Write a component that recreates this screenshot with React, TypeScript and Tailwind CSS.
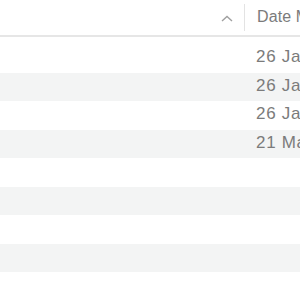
export default function App() {
  const rows = ["26 Jan 2023", "26 Jan 2023", "26 Jan 2023", "21 Mar 2023", "", "", "", "", ""];
  return (
    <div className="w-[300px] h-[300px] overflow-hidden bg-white font-['Liberation_Sans',Arial,sans-serif] text-[#7b7b7b]">
      <div className="h-[37px] flex items-center border-b-2 border-[#e6e6e6]">
        <div className="w-[244px] shrink-0 flex justify-end pr-[11px]">
          <svg width="12" height="7" viewBox="0 0 12 7" className="mt-[1px]">
            <path d="M1 6 L6 1.5 L11 6" fill="none" stroke="#a0a0a0" strokeWidth="1.4" />
          </svg>
        </div>
        <div className="w-px h-[27px] shrink-0 bg-[#e3e3e3]" />
        <div className="pl-[12px] text-[16px] tracking-[0.1px] whitespace-nowrap -mt-[1px]">Date Modified</div>
      </div>
      <div className="pt-[7px]">
        {rows.map((r, i) => (
          <div
            key={i}
            className={`${i % 2 === 0 ? "bg-white" : "bg-[#f3f4f4]"} h-[28.5px] flex items-center`}
          >
            <div className="pl-[256px] text-[17px] tracking-[0.7px] whitespace-nowrap -mt-[3px]">{r}</div>
          </div>
        ))}
      </div>
    </div>
  );
}
